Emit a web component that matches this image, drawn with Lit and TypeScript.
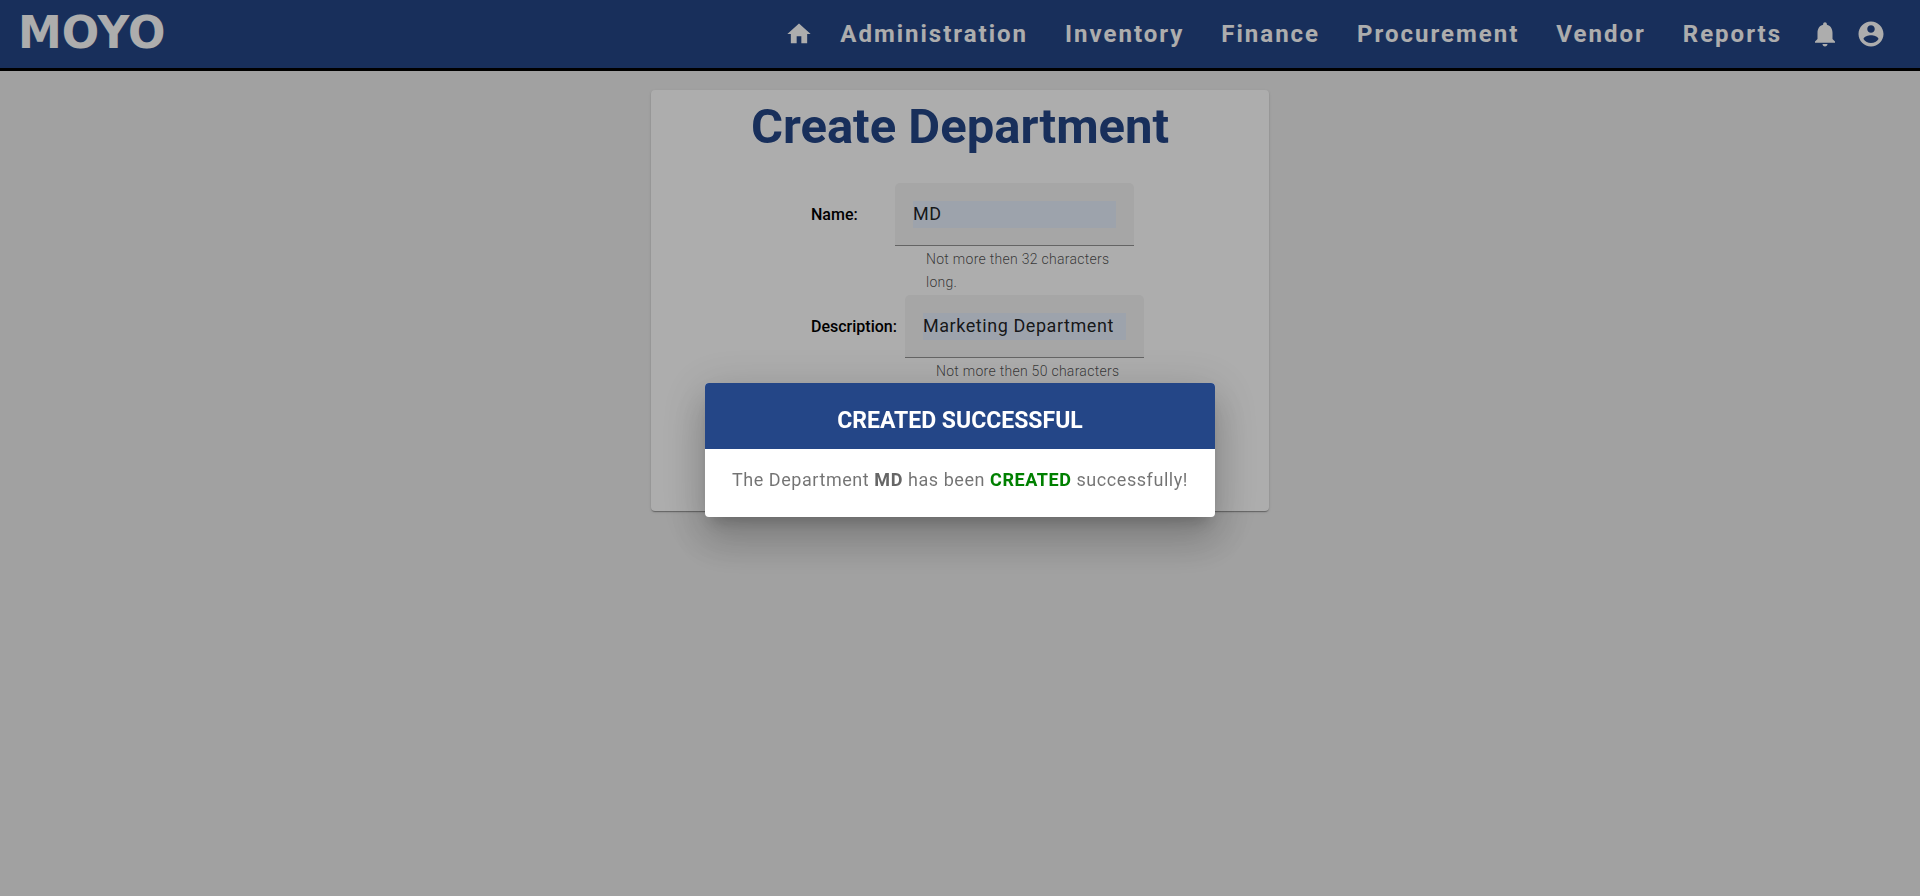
import { LitElement, html, css } from "lit";
import { customElement, property } from "lit/decorators.js";

@customElement("top-bar")
class TopBar extends LitElement {
  static styles = css`
    :host {
      display: block;
    }
    .bar {
      display: flex;
      align-items: center;
      justify-content: space-between;
      box-sizing: border-box;
      height: 71px;
      padding: 0 34px 0 18px;
      background: #244687;
      border-bottom: 3px solid #000;
      color: #fff;
    }
    .logo {
      padding-bottom: 2px;
      color: #fff;
      font: 700 44px/44px "DejaVu Sans", sans-serif;
      text-decoration: none;
    }
    .links {
      display: flex;
      align-items: center;
    }
    button {
      display: flex;
      align-items: center;
      padding: 0;
      border: 0;
      background: none;
      color: inherit;
      cursor: pointer;
    }
    .menu {
      margin-right: 37px;
      font: 700 24px/32px Roboto, sans-serif;
      letter-spacing: 2px;
    }
    .home {
      margin-right: 27px;
    }
    .bell {
      margin: 0 16px 0 -9px;
    }
    svg {
      display: block;
      fill: currentColor;
    }
  `;

  private icon(d: string, size: number) {
    return html`<svg width=${size} height=${size} viewBox="0 0 24 24" aria-hidden="true"><path d=${d} /></svg>`;
  }

  render() {
    const menus = ["Administration", "Inventory", "Finance", "Procurement", "Vendor", "Reports"];
    return html`
      <header class="bar">
        <a class="logo" href="#">MOYO</a>
        <nav class="links">
          <button class="home" aria-label="Home">${this.icon("M10 20v-6h4v6h5v-8h3L12 3 2 12h3v8z", 28)}</button>
          ${menus.map((m) => html`<button class="menu">${m}</button>`)}
          <button class="bell" aria-label="Notifications">
            ${this.icon("M12 22c1.1 0 2-.9 2-2h-4c0 1.1.89 2 2 2zm6-6v-5c0-3.07-1.64-5.64-4.5-6.32V4c0-.83-.67-1.5-1.5-1.5s-1.5.67-1.5 1.5v.68C7.63 5.36 6 7.92 6 11v5l-2 2v1h16v-1l-2-2z", 30)}
          </button>
          <button aria-label="Account">
            ${this.icon("M12 2C6.48 2 2 6.48 2 12s4.48 10 10 10 10-4.48 10-10S17.52 2 12 2zm0 3c1.66 0 3 1.34 3 3s-1.34 3-3 3-3-1.34-3-3 1.34-3 3-3zm0 14.2c-2.5 0-4.71-1.28-6-3.22.03-1.99 4-3.08 6-3.08 1.99 0 5.97 1.09 6 3.08-1.29 1.94-3.5 3.22-6 3.22z", 30)}
          </button>
        </nav>
      </header>
    `;
  }
}

@customElement("form-row")
class FormRow extends LitElement {
  @property() label = "";
  @property() value = "";
  @property() hint = "";

  static styles = css`
    :host {
      display: block;
    }
    .row {
      display: flex;
      align-items: flex-start;
      gap: 8px;
    }
    label {
      min-width: 76px;
      font-size: 16px;
      font-weight: 500;
      line-height: 63px;
      color: #000;
    }
    .field {
      width: 239px;
    }
    .box {
      padding: 18px 18px 17px;
      background: #f5f5f5;
      border-bottom: 1px solid #949494;
      border-radius: 5px 5px 0 0;
    }
    input {
      display: block;
      box-sizing: border-box;
      width: 100%;
      height: 27px;
      padding: 0 0 2px;
      border: 0;
      outline: 0;
      background: #e8f0fe;
      color: rgba(0, 0, 0, 0.87);
      font: 400 18px/25px Roboto, sans-serif;
      letter-spacing: 0.03125em;
    }
    .hint {
      margin: 0;
      padding: 2px 16px 1px 31px;
      font-size: 14px;
      font-weight: 300;
      line-height: 23px;
      letter-spacing: 0.02em;
      color: rgba(0, 0, 0, 0.7);
    }
  `;

  render() {
    return html`
      <div class="row">
        <label for="field">${this.label}</label>
        <div class="field">
          <div class="box"><input id="field" type="text" .value=${this.value} aria-describedby="hint" /></div>
          <p class="hint" id="hint">${this.hint}</p>
        </div>
      </div>
    `;
  }
}

@customElement("app-root")
class AppRoot extends LitElement {
  static styles = css`
    :host {
      display: block;
      min-height: 100vh;
      background: #ededed;
      font-family: Roboto, sans-serif;
    }
    main {
      padding: 19px 16px;
    }
    .card {
      box-sizing: border-box;
      max-width: 618px;
      margin: 0 auto;
      padding: 7px 0 104px;
      background: #fff;
      border-radius: 4px;
      box-shadow: 0 2px 1px -1px rgba(0, 0, 0, 0.2), 0 1px 1px rgba(0, 0, 0, 0.14), 0 1px 3px rgba(0, 0, 0, 0.12);
    }
    h1 {
      margin: 0 0 26px;
      text-align: center;
      font-size: 49px;
      font-weight: 700;
      line-height: 60px;
      color: #244687;
    }
    form {
      padding-left: 160px;
    }
    .backdrop {
      position: fixed;
      inset: 0;
      display: flex;
      align-items: center;
      justify-content: center;
      padding-top: 4px;
      background: rgba(0, 0, 0, 0.32);
    }
    dialog {
      position: static;
      margin: 0;
      padding: 0;
      border: 0;
      border-radius: 4px;
      overflow: hidden;
      background: #fff;
      box-shadow: 0 11px 15px -7px rgba(0, 0, 0, 0.2), 0 24px 38px 3px rgba(0, 0, 0, 0.14),
        0 9px 46px 8px rgba(0, 0, 0, 0.12);
    }
    h2 {
      margin: 0;
      padding: 22px 28px 12px;
      background: #244687;
      color: #fff;
      text-align: center;
      font-size: 23px;
      font-weight: 700;
      line-height: 32px;
    }
    .message {
      margin: 0;
      padding: 17px 27px 24px;
      font-size: 18px;
      font-weight: 400;
      line-height: 27px;
      letter-spacing: 0.03125em;
      color: rgba(0, 0, 0, 0.55);
    }
    .message strong {
      font-weight: 700;
      color: #666;
    }
    .message .created {
      color: green;
    }
  `;

  render() {
    return html`
      <top-bar></top-bar>
      <main>
        <section class="card">
          <h1>Create Department</h1>
          <form>
            <form-row label="Name:" value="MD" hint="Not more then 32 characters long."></form-row>
            <form-row label="Description:" value="Marketing Department" hint="Not more then 50 characters long."></form-row>
          </form>
        </section>
      </main>
      <div class="backdrop">
        <dialog open aria-labelledby="title">
          <h2 id="title">CREATED SUCCESSFUL</h2>
          <p class="message">
            The Department <strong>MD</strong> has been <strong class="created">CREATED</strong> successfully!
          </p>
        </dialog>
      </div>
    `;
  }
}
